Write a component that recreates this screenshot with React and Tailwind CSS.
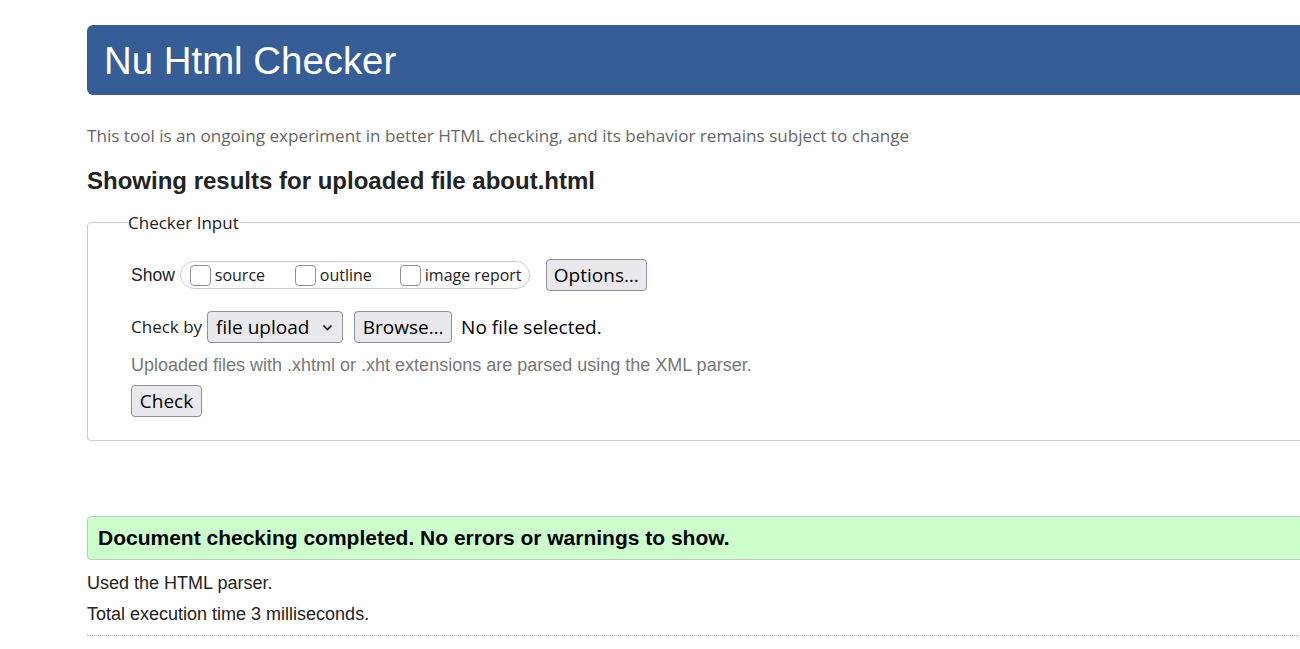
import React from "react";

const seg = { fontFamily: '"Open Sans", "Noto Sans", sans-serif' };
const arial = { fontFamily: '"Liberation Sans", Arial, sans-serif' };

function Box() {
  return (
    <span className="inline-block w-[21px] h-[21px] rounded-[4px] border border-[#8f8f9d] bg-white mr-[4px]" />
  );
}

function Btn({ children, className = "" }) {
  return (
    <span
      className={`inline-flex items-center justify-center border border-[#8f8f9d] rounded-[4px] bg-[#e9e9ed] text-black text-[19px] leading-none ${className}`}
      style={seg}
    >
      {children}
    </span>
  );
}

export default function App() {
  return (
    <div className="w-[1300px] h-[649px] overflow-hidden bg-white" style={arial}>
      <div className="ml-[87px] w-[1260px] pt-[25px]">
        <div className="h-[70px] bg-[#365d95] rounded-[6px] flex items-center pl-[17px]">
          <h1 className="text-white text-[38.4px] leading-none font-normal mt-[2px]" style={arial}>
            Nu Html Checker
          </h1>
        </div>

        <p className="mt-[29px] text-[17.1px] text-[#666] leading-[24px]" style={seg}>
          This tool is an ongoing experiment in better HTML checking, and its behavior remains subject to change
        </p>

        <h2 className="mt-[18px] text-[24px] font-bold text-[#222] leading-[30px]" style={arial}>
          Showing results for uploaded file about.html
        </h2>

        <fieldset className="mt-[18px] border border-[#ccc] rounded-[4px] pl-[40px] pb-[23px] pt-[14px]">
          <legend className="px-0 text-[17px] text-[#222] leading-none" style={seg}>
            Checker Input
          </legend>

          <div className="pl-[3px]">
            <div className="flex items-center h-[32px] mt-[14px]">
              <span className="text-[17.5px] text-[#222] mr-[5px]" style={arial}>Show</span>
              <span className="flex items-center h-[28px] w-[350px] border border-[#ccc] rounded-full pl-[9px] text-[16px] text-[#222]" style={seg}>
                <span className="flex items-center w-[105px]"><Box />source</span>
                <span className="flex items-center w-[105px]"><Box />outline</span>
                <span className="flex items-center"><Box />image report</span>
              </span>
              <Btn className="ml-[16px] w-[101px] h-[32px]">Options…</Btn>
            </div>

            <div className="flex items-center h-[32px] mt-[20px]">
              <span className="text-[17px] text-[#222] mr-[5px]" style={seg}>Check by</span>
              <Btn className="w-[136px] h-[32px] justify-start pl-[8px]">
                file upload
                <svg className="ml-[13px]" width="11" height="7" viewBox="0 0 11 7" fill="none">
                  <path d="M1.5 1.5 L5.5 5.5 L9.5 1.5" stroke="#000" strokeWidth="1.6" />
                </svg>
              </Btn>
              <Btn className="ml-[11px] w-[98px] h-[32px]">Browse…</Btn>
              <span className="ml-[9px] text-[19px] text-black" style={seg}>No file selected.</span>
            </div>

            <p className="mt-[10px] text-[18px] text-[#777] leading-[24px]" style={arial}>
              Uploaded files with .xhtml or .xht extensions are parsed using the XML parser.
            </p>

            <div className="mt-[8px] flex">
              <Btn className="w-[71px] h-[32px]">Check</Btn>
            </div>
          </div>
        </fieldset>

        <div className="mt-[75px] h-[44px] bg-[#ccffcc] border border-[#c5c5c5] rounded-[4px] flex items-center pl-[10px]">
          <span className="text-[21px] font-bold text-black" style={arial}>
            Document checking completed. No errors or warnings to show.
          </span>
        </div>

        <p className="mt-[11px] text-[18px] text-[#222] leading-[24px]" style={arial}>Used the HTML parser.</p>
        <p className="mt-[7px] text-[18px] text-[#222] leading-[24px]" style={arial}>Total execution time 3 milliseconds.</p>
        <div className="mt-[9px] border-t border-dotted border-[#aaa]" />
      </div>
    </div>
  );
}
